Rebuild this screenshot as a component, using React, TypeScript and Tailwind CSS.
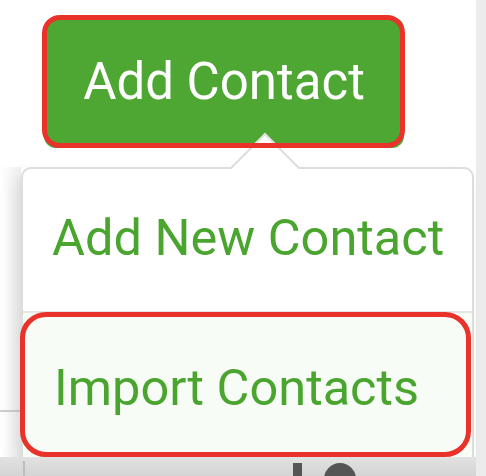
import React from "react"

// Annotated screenshot: "Add Contact" button with its open dropdown.
export default function App() {
  return (
    <div className="relative flex h-[476px] w-[486px] overflow-hidden bg-white font-['Roboto',sans-serif]">
      <div className="relative flex w-[476px] flex-col">
        {/* trigger */}
        <div className="h-[167px] shrink-0 pl-[44px] pt-[17px]">
          <div className="flex h-[131px] w-[360px] items-center justify-center rounded-[12px] bg-[#4ea733] pb-[2px] text-[51px] leading-none text-white">
            Add Contact
          </div>
        </div>

        {/* dropdown */}
        <div className="flex shrink-0">
          <div className="flex w-[21px] flex-col bg-gradient-to-r from-white to-[#f1f1f1]">
            <div className="h-[243px]" />
            <div className="h-[2px] bg-[#cfcfcf]" />
          </div>
          <div className="w-[453px] rounded-t-[10px] border-x-2 border-t-2 border-[#dddddd] bg-white shadow-[-6px_8px_16px_rgba(0,0,0,0.10)]">
            <div className="flex h-[142px] items-center pb-[4px] pl-[29px] text-[50.5px] leading-none text-[#4aa52f]">
              Add New Contact
            </div>
            <div className="h-[2px] bg-[#e6e6e6]" />
            <div className="flex h-[144px] items-center pl-[31px] pt-[6px] text-[50.5px] leading-none text-[#4aa52f] bg-[#f8fcf6]">
              Import Contacts
            </div>
          </div>
        </div>

        {/* page behind */}
        <div className="flex min-h-0 flex-1 items-start overflow-hidden bg-gradient-to-b from-[#e2e2e2] to-[#d4d4d4] pl-[23px] pt-[4px]">
          <div className="h-[40px] w-[2px] shrink-0 bg-[#bdbdbd]" />
          <div className="ml-[268px] mt-[2px] h-[20px] w-[9px] shrink-0 bg-[#555]" />
          <div className="ml-[22px] mt-[2px] h-[32px] w-[32px] shrink-0 rounded-full bg-[#555]" />
        </div>

        {/* caret */}
        <div className="absolute left-[240px] top-[143px] h-[50px] w-[50px] rotate-45 border-l-2 border-t-2 border-[#dddddd] bg-white" />

        {/* annotation outlines */}
        <div className="pointer-events-none absolute left-[42px] top-[15px] h-[133px] w-[363px] rounded-[18px] border-[5px] border-[#e8322a]" />
        <div className="pointer-events-none absolute left-[20px] top-[312px] h-[145px] w-[451px] rounded-[26px] border-[5px] border-[#e8322a]" />
      </div>
      <div className="w-[10px] bg-[#ececec]" />
    </div>
  )
}
